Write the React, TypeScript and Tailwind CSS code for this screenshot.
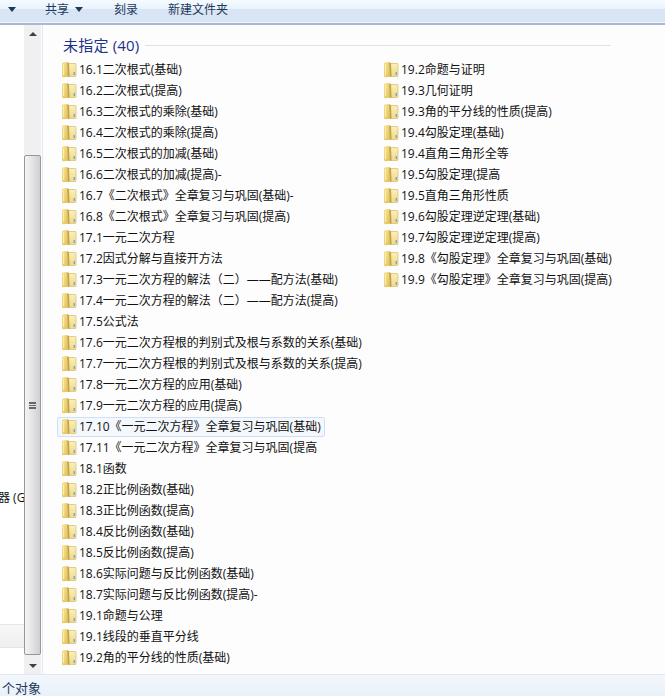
const left = [
  '16.1二次根式(基础)',
  '16.2二次根式(提高)',
  '16.3二次根式的乘除(基础)',
  '16.4二次根式的乘除(提高)',
  '16.5二次根式的加减(基础)',
  '16.6二次根式的加减(提高)-',
  '16.7《二次根式》全章复习与巩固(基础)-',
  '16.8《二次根式》全章复习与巩固(提高)',
  '17.1一元二次方程',
  '17.2因式分解与直接开方法',
  '17.3一元二次方程的解法（二）——配方法(基础)',
  '17.4一元二次方程的解法（二）——配方法(提高)',
  '17.5公式法',
  '17.6一元二次方程根的判别式及根与系数的关系(基础)',
  '17.7一元二次方程根的判别式及根与系数的关系(提高)',
  '17.8一元二次方程的应用(基础)',
  '17.9一元二次方程的应用(提高)',
  '17.10《一元二次方程》全章复习与巩固(基础)',
  '17.11《一元二次方程》全章复习与巩固(提高',
  '18.1函数',
  '18.2正比例函数(基础)',
  '18.3正比例函数(提高)',
  '18.4反比例函数(基础)',
  '18.5反比例函数(提高)',
  '18.6实际问题与反比例函数(基础)',
  '18.7实际问题与反比例函数(提高)-',
  '19.1命题与公理',
  '19.1线段的垂直平分线',
  '19.2角的平分线的性质(基础)',
]

const right = [
  '19.2命题与证明',
  '19.3几何证明',
  '19.3角的平分线的性质(提高)',
  '19.4勾股定理(基础)',
  '19.4直角三角形全等',
  '19.5勾股定理(提高',
  '19.5直角三角形性质',
  '19.6勾股定理逆定理(基础)',
  '19.7勾股定理逆定理(提高)',
  '19.8《勾股定理》全章复习与巩固(基础)',
  '19.9《勾股定理》全章复习与巩固(提高)',
]

const font = 'font-["Open_Sans","Noto_Sans_CJK_SC",sans-serif]'

function FolderIcon() {
  return (
    <svg width="16" height="17" viewBox="0 0 16 17" className="shrink-0">
      <defs>
        <linearGradient id="flap" x1="0" y1="0" x2="1" y2="1">
          <stop offset="0" stopColor="#f4e08f" />
          <stop offset="0.6" stopColor="#e9cd70" />
          <stop offset="1" stopColor="#d9b655" />
        </linearGradient>
        <linearGradient id="back" x1="0" y1="0" x2="0" y2="1">
          <stop offset="0" stopColor="#f9f0bb" />
          <stop offset="1" stopColor="#efd98a" />
        </linearGradient>
      </defs>
      <path d="M7 2.5 L14.2 2.5 Q15 2.5 15 3.3 L15 14.5 Q15 15.5 14 15.5 L7 15.5 Z" fill="url(#back)" stroke="#dcc272" strokeWidth="0.8" />
      <path d="M1 2.6 Q1 1.6 2 1.5 L6 1 L8 2.2 L8.4 15.6 L2.4 16.2 Q1 16.2 1 15 Z" fill="url(#flap)" />
      <path d="M6.2 1.2 L8 2.2 L8.4 15.6 L7 15.8 Z" fill="#c4a244" />
      <rect x="2" y="3" width="1.2" height="11" fill="#f8ecb0" />
      <rect x="12.6" y="11" width="1.4" height="3" fill="#6fa8d8" />
    </svg>
  )
}

function FolderRow({ name, selected }: { name: string; selected?: boolean }) {
  return (
    <div className="flex h-[21px] items-center">
      <div
        className={`flex h-[20px] items-center rounded-[2px] border pl-[3px] pr-[3px] ${
          selected ? 'border-[#cfe0f3] bg-[#f4f8fd]' : 'border-transparent'
        }`}>
        <FolderIcon />
        <span className="ml-[2px] whitespace-nowrap text-[12px] leading-[19px] text-[#111111]">
          {name}
        </span>
      </div>
    </div>
  )
}

export default function App() {
  return (
    <div className={`flex h-[696px] w-[665px] flex-col overflow-hidden bg-[#fdfdfd] ${font}`}>
      <div className="flex h-[25px] shrink-0 flex-col border-b-2 border-[#aab7d3]">
        <div className="flex h-[23px] items-center bg-[linear-gradient(#f5fbff_0px,#e9f3fc_9px,#d9e5f4_9px,#d9e5f4_22px,#eef5fc_22px)] pb-[4px] text-[12px] text-[#1e395b]">
          <span className="ml-[8px] h-0 w-0 border-x-[4px] border-t-[5px] border-x-transparent border-t-[#1e395b]" />
          <span className="ml-[29px]">共享</span>
          <span className="ml-[6px] h-0 w-0 border-x-[4px] border-t-[5px] border-x-transparent border-t-[#1e395b]" />
          <span className="ml-[31px]">刻录</span>
          <span className="ml-[30px]">新建文件夹</span>
        </div>
      </div>

      <div className="flex min-h-0 flex-1">
        <div className="flex w-[24px] shrink-0 flex-col overflow-hidden bg-white text-[12px] leading-none text-[#111111]">
          <div className="h-[467px]" />
          <div className="ml-[-2px] whitespace-nowrap">器 (G</div>
          <div className="h-[102px]" />
          <div className="ml-[-9px]">]</div>
          <div className="mt-[6px] h-[24px] border-y border-[#e5e5e5] bg-gradient-to-b from-[#f7f7f7] to-[#efefef]" />
        </div>

        <div className="flex w-[17px] shrink-0 flex-col bg-[#f0f0f0]">
          <div className="flex h-[17px] items-center justify-center">
            <span className="h-0 w-0 border-x-[4px] border-b-[4px] border-x-transparent border-b-[#404040]" />
          </div>
          <div className="h-[113px]" />
          <div className="flex h-[500px] items-center justify-center rounded-[2px] border border-[#979797] bg-gradient-to-r from-[#f4f4f4] via-[#e3e3e3] to-[#cfcfcf]">
            <span className="h-[7px] w-[7px] border-y-2 border-[#666666] bg-[linear-gradient(#666666,#666666)] bg-[length:100%_1px] bg-center bg-no-repeat" />
          </div>
          <div className="flex-1" />
          <div className="flex h-[17px] items-center justify-center">
            <span className="h-0 w-0 border-x-[4px] border-t-[4px] border-x-transparent border-t-[#404040]" />
          </div>
        </div>

        <div className="w-[2px] shrink-0 bg-[linear-gradient(90deg,#ffffff_50%,#dfe8f6_50%)]" />

        <div className="min-w-0 flex-1 pl-[14px] pt-[7px]">
          <div className="flex h-[26px] items-center">
            <span className="ml-[6px] text-[15px] tracking-[0.2px] text-[#1e3287]">未指定 (40)</span>
            <div className="ml-[5px] mr-[54px] h-px flex-1 bg-[#e2e2e2]" />
          </div>
          <div className="mt-[1px] flex">
            <div className="flex w-[322px] shrink-0 flex-col">
              {left.map(name => (
                <FolderRow key={name} name={name} selected={name.startsWith('17.10')} />
              ))}
            </div>
            <div className="flex flex-col">
              {right.map(name => (
                <FolderRow key={name} name={name} />
              ))}
            </div>
          </div>
        </div>
      </div>

      <div className="flex h-[22px] shrink-0 items-center overflow-hidden border-t border-[#dfe8f4] bg-gradient-to-b from-[#f3f7fc] to-[#eaf1fa] pt-[6px] text-[13px] text-[#1e395b]">
        <span className="ml-[2px]">个对象</span>
      </div>
    </div>
  )
}
